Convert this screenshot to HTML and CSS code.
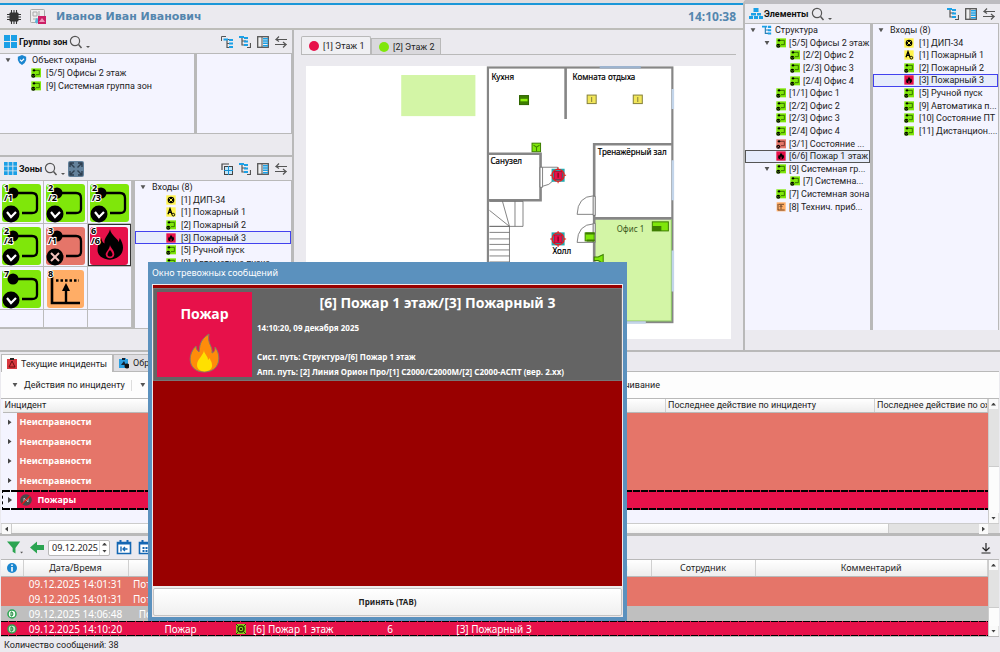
FILE: index.html
```html
<!DOCTYPE html>
<html lang="ru">
<head>
<meta charset="utf-8">
<meta name="viewport" content="width=device-width, initial-scale=1">
<title>Монитор</title>
<link rel="stylesheet" href="styles.css">
</head>
<body>
<svg class="sprite" aria-hidden="true">
  <symbol id="loop" viewBox="0 0 30 30"><rect x="1" y="1" width="29" height="27" fill="#7fe70a"/><path d="M9 7H25V20H15" fill="none" stroke="#1d4a00" stroke-width="2.2"/><circle cx="9" cy="7" r="3.5"/><circle cx="7" cy="23" r="6"/><path d="M4 22l3 3 4-4" fill="none" stroke="#7fe70a" stroke-width="1.8"/></symbol>
  <symbol id="fault" viewBox="0 0 30 30"><rect x="1" y="1" width="29" height="27" fill="#e57569"/><path d="M9 7H25V20H15" fill="none" stroke="#53201a" stroke-width="2.2"/><circle cx="9" cy="7" r="3.5"/><circle cx="7" cy="23" r="6"/><path d="M4 20l6 6m0-6l-6 6" stroke="#e57569" stroke-width="1.8"/></symbol>
  <symbol id="flame" viewBox="0 0 24 28"><path d="M12 0c1 6 8 9 8 12l1-4c6 9 3 19-9 20C-1 27-2 18 4 8c0 2 1 4 3 5C6 8 11 5 12 0z"/><path d="M12 14c0 3 4 5 4 9 0 5-8 5-8 0 0-2 4-5 4-9z" fill="#e7114a"/><path d="M12 19c3 3 3 6 0 6s-3-3 0-6z"/></symbol>
  <symbol id="fire" viewBox="0 0 30 30"><rect x="1" y="1" width="28" height="28" fill="#e7114a"/><use href="#flame" x="6" y="4" width="18" height="22"/></symbol>
  <symbol id="tech" viewBox="0 0 30 30"><rect x="2" y="1" width="27" height="27" fill="#ffad66"/><path d="M6 6V24H26M8 7H24M15 22V11m-4 4l4-5 4 5" fill="none" stroke="#532" stroke-width="2.4"/></symbol>
  <symbol id="sensor" viewBox="0 0 30 30"><rect x="1" y="1" width="28" height="28" fill="#fff34d"/><circle cx="15" cy="15" r="10"/><path d="M10 10l10 10m0-10L10 20" stroke="#fff34d" stroke-width="3"/></symbol>
  <symbol id="auto" viewBox="0 0 30 30"><rect x="1" y="1" width="28" height="28" fill="#fff34d"/><path d="M6 22L12 5l6 17M8 16h8" fill="none" stroke="#000" stroke-width="4"/><circle cx="22" cy="23" r="4" fill="#fff34d" stroke="#000" stroke-width="3"/></symbol>
  <symbol id="search" viewBox="0 0 22 14"><circle cx="6" cy="6" r="4.6" fill="none" stroke="#555" stroke-width="1.2"/><path d="M9.5 9.5L12.5 13" stroke="#555" stroke-width="1.5"/><path d="M17 11h4l-2 2z" fill="#555"/></symbol>
  <symbol id="collapse" viewBox="0 0 12 12"><path d="M.5 5V.5H5" fill="none" stroke="#555"/><path d="M3 3.500h5M6 3.500v8h4M6 7.500h4" fill="none" stroke="#555" stroke-width="1.2"/><path d="M2.500 2.500H7v2H2.500zM8 3h4v2H8zM8 6.500h4v2H8zM8 10h4v2H8z" fill="#1ba0e6"/></symbol>
  <symbol id="expand" viewBox="0 0 12 12"><path d="M3 2v7h4M3 5h4M11.500 7v4.500H8" fill="none" stroke="#555" stroke-width="1.2"/><path d="M0 0h5v2H0zM5 1h4v2H5zM5 4.500h4v2H5zM5 8h4v2H5z" fill="#1ba0e6"/></symbol>
  <symbol id="gridview" viewBox="0 0 12 12"><path d="M1 7V1H8" fill="none" stroke="#444" stroke-width="1.2"/><rect x="3.5" y="3.5" width="8" height="8" fill="#bfe6fa" stroke="#444"/><path d="M7.500 3v9M3 7.500h9" stroke="#168fd0"/></symbol>
  <symbol id="columns" viewBox="0 0 12 12"><rect x=".7" y=".7" width="10.600" height="10.600" fill="#eee" stroke="#555" stroke-width="1.300"/><path d="M5 1v10" stroke="#555"/><path d="M6 2h5v1.500H6zM6 4.300h5v1.500H6zM6 6.600h5v1.500H6zM6 9h5v1.500H6z" fill="#1ba0e6"/></symbol>
  <symbol id="swap" viewBox="0 0 12 12"><path d="M12 3.500H1l3-3m-3 3l3 2M0 8.500h11l-3-2.500m3 2.500l-3 3" fill="none" stroke="#555" stroke-width="1.200"/></symbol>
  <symbol id="treeicon" viewBox="0 0 12 12"><path d="M4 2v8h4M4 6h4" fill="none" stroke="#2a82b8" stroke-width="1.400"/><path d="M0 1h6v2H0zM7 1h4v2.500H7zM7 5h4v2.500H7zM7 9h4v2.500H7z" fill="#1ba0e6"/></symbol>
  <symbol id="zloop" viewBox="0 0 44 43"><rect x="2" y="3" width="39" height="38" rx="3" fill="#7fe70a"/><path d="M13 12H32Q37 12 37 17V28Q37 32 32 32H22" fill="none" stroke="#000" stroke-width="2.300"/><circle cx="13" cy="12" r="5.500"/><circle cx="11" cy="33" r="8.500"/><path d="M7 31l4 5 5-5" fill="none" stroke="#fff" stroke-width="2.200"/></symbol>
</svg>

<div class="upper">
  <main class="workspace">
    <header class="topbar">
      <svg class="chip" viewBox="0 0 14 14"><path d="M4.500 0v14M7 0v14M9.500 0v14M0 4.500h14M0 7h14M0 9.500h14" stroke="#333" stroke-width="1.100"/><rect x="2.500" y="2.500" width="9" height="9" rx="1" fill="#333"/></svg>
      <svg class="planicon" viewBox="0 0 17 16"><rect x=".5" y=".5" width="14" height="13" rx="1" fill="#eee" stroke="#aaa"/><path d="M3 3h4v4H3zM9 2v6h4M3 10h6" fill="none" stroke="#aaa"/><path d="M6 9l3 1-2 5-2-2z" fill="#5bb5dd"/><rect x="8" y="7" width="8" height="8" fill="#cc1f66"/><path d="M9 13l3-4 3 4z" fill="#ee9abb"/></svg>
      <h1 class="user">Иванов Иван Иванович</h1>
      <time class="clock">14:10:38</time>
    </header>
    <div class="body">
      <aside class="dock">
        <section class="panel groups">
          <div class="head">
            <svg class="ico13" viewBox="0 0 13 13"><path d="M0 0h6v6H0zM7 0h6v6H7zM0 7h6v6H0zM7 7h6v6H7z" fill="#1ba0e6"/></svg>
            <h2>Группы зон</h2><button class="ib find" aria-label="Поиск"><svg><use href="#search"/></svg></button>
            <span class="grow"></span>
            <button class="ib" aria-label="Свернуть"><svg><use href="#collapse"/></svg></button><button class="ib" aria-label="Развернуть"><svg><use href="#expand"/></svg></button><button class="ib" aria-label="Столбцы"><svg><use href="#columns"/></svg></button><button class="ib" aria-label="Поменять"><svg><use href="#swap"/></svg></button>
          </div>
          <div class="panes groups-panes">
            <div class="pane">
              <ul class="tree rows3">
                <li><i class="caret"></i><svg viewBox="0 0 12 12"><path d="M6 0L11 2V6Q10 10 6 12 2 10 1 6V2z" fill="#1b86d0"/><path d="M3.500 5.500l2 2 3-3" fill="none" stroke="#fff" stroke-width="1.300"/></svg>Объект охраны</li>
                <li class="l1"><svg><use href="#loop"/></svg>[5/5] Офисы 2 этаж</li>
                <li class="l1"><svg><use href="#loop"/></svg>[9] Системная группа зон</li>
              </ul>
            </div>
            <div class="pane"></div>
          </div>
        </section>
        <section class="panel zones">
          <div class="head">
            <svg class="ico13" viewBox="0 0 13 13"><path d="M0 0h3.700v3.700H0zM4.600 0h3.800v3.700H4.600zM9.300 0H13v3.700H9.300zM0 4.600h3.700v3.800H0zM4.600 4.600h3.800v3.800H4.600zM9.300 4.600H13v3.800H9.300zM0 9.300h3.700V13H0zM4.600 9.300h3.800V13H4.600zM9.300 9.300H13V13H9.300z" fill="#1ba0e6"/></svg>
            <h2>Зоны</h2><button class="ib find" aria-label="Поиск"><svg><use href="#search"/></svg></button>
            <button class="full" aria-label="Во весь экран"><svg viewBox="0 0 16 16"><path d="M2 6V2h4M10 2h4v4M14 10v4h-4M6 14H2v-4M2.500 2.500L6.500 6.500M13.500 2.500l-4 4M13.500 13.500l-4-4M2.500 13.500l4-4" fill="none" stroke="#2e3f50" stroke-width="1.400"/></svg></button>
            <span class="grow"></span>
            <button class="ib" aria-label="Плитка"><svg><use href="#gridview"/></svg></button><button class="ib" aria-label="Развернуть"><svg><use href="#expand"/></svg></button><button class="ib" aria-label="Столбцы"><svg><use href="#columns"/></svg></button><button class="ib" aria-label="Поменять"><svg><use href="#swap"/></svg></button>
          </div>
          <div class="panes zones-panes">
            <ul class="tiles pane">
              <li><svg viewBox="0 0 44 43"><use href="#zloop"/><text x="4" y="10">1</text><text x="4" y="20">/1</text></svg></li>
              <li><svg viewBox="0 0 44 43"><use href="#zloop"/><text x="4" y="10">2</text><text x="4" y="20">/2</text></svg></li>
              <li><svg viewBox="0 0 44 43"><use href="#zloop"/><text x="4" y="10">2</text><text x="4" y="20">/3</text></svg></li>
              <li><svg viewBox="0 0 44 43"><use href="#zloop"/><text x="4" y="10">2</text><text x="4" y="20">/4</text></svg></li>
              <li><svg viewBox="0 0 44 43"><rect x="2" y="3" width="39" height="38" rx="3" fill="#e57569"/><path d="M13 12H32Q37 12 37 17V28Q37 32 32 32H22" fill="none" stroke="#000" stroke-width="2.300"/><circle cx="13" cy="12" r="5.500"/><circle cx="11" cy="33" r="8.500"/><path d="M7 29l8 8m0-8l-8 8" stroke="#f2c2bc" stroke-width="2"/><text x="4" y="10">3</text><text x="4" y="20">/1</text></svg></li>
              <li class="on"><svg viewBox="0 0 44 43"><rect x="2" y="3" width="38" height="38" rx="3" fill="#e7114a"/><use href="#flame" x="9" y="5" width="26" height="31"/><text x="3" y="10">6</text><text x="3" y="20">/6</text></svg></li>
              <li><svg viewBox="0 0 44 43"><use href="#zloop"/><text x="4" y="10">7</text></svg></li>
              <li><svg viewBox="0 0 44 43"><rect x="3" y="3" width="37" height="38" rx="3" fill="#ffad66"/><path d="M8 9V36H36" fill="none" stroke="#000" stroke-width="2.600"/><path d="M12 13.500H35" stroke="#000" stroke-width="2.400" stroke-dasharray="2.500 2"/><path d="M22 35V19" stroke="#000" stroke-width="2.400"/><path d="M18 24l4-8 4 8z"/><text x="4" y="10">8</text></svg></li>
              <li></li><li></li><li></li><li></li>
            </ul>
            <div class="pane">
              <ul class="tree rows9">
                <li><i class="caret"></i>Входы (8)</li>
                <li class="l1"><svg><use href="#sensor"/></svg>[1] ДИП-34</li>
                <li class="l1"><svg><use href="#auto"/></svg>[1] Пожарный 1</li>
                <li class="l1"><svg><use href="#loop"/></svg>[2] Пожарный 2</li>
                <li class="l1 sel"><svg><use href="#fire"/></svg>[3] Пожарный 3</li>
                <li class="l1"><svg><use href="#loop"/></svg>[5] Ручной пуск</li>
                <li class="l1"><svg><use href="#loop"/></svg>[9] Автоматика пуска</li>
              </ul>
            </div>
          </div>
        </section>
      </aside>
      <section class="floor">
        <div class="tabs" role="tablist">
          <button class="tab active" role="tab"><i class="dot red"></i>[1] Этаж 1</button><button class="tab" role="tab"><i class="dot green"></i>[2] Этаж 2</button>
        </div>
        <svg class="plan" viewBox="307 66 424 272">
          <rect x="402" y="75" width="74" height="41" fill="#d3f5a6"/>
          <rect x="595" y="219" width="77" height="102" fill="#d3f5a6"/>
          <g fill="none" stroke="#868686" stroke-width="2.200"><rect x="488.500" y="67.500" width="184" height="254"/><path d="M566 68V119M672 144H594.500V321M488 153.500H541V200H488M594 218H672" stroke-width="2.600"/></g>
          <path d="M595.500 320.500H671.500V219" fill="none" stroke="#8cc763"/>
          <path d="M600 67h41" stroke="#9db4cf" stroke-width="3"/>
          <path d="M673 89v20M673 160v40M673 250v41M627 322h19" stroke="#c3d5ea" stroke-width="2.500"/>
          <g fill="#fff" stroke="#666" stroke-width=".8"><path d="M543 167H558Q557 184 543 186M577.500 214Q578 196 594 195.500M577.500 214H594M577.500 242Q578 224 594 223.500M577.500 242H594"/><path d="M540.500 167h2.500v20h-2.500zM593.500 196h2v19h-2zM593.500 223h2v19h-2z"/><path d="M490 201h33.500v25H490M515.500 201v25M503 201l7 25L490 210M510 226v60M490 226h20M490 232h20M490 238.500h20M490 244h20M490 249.500h20M490 255.500h20M490 261.500h20" fill="none"/></g>
          <g stroke="#2f6500"><rect x="520" y="95.500" width="9" height="9" fill="#3d7d00"/><path d="M521 100h7" stroke="#8ff010" stroke-width="2.500"/></g>
          <g fill="#f2e65a" stroke="#85803a"><rect x="587.500" y="95" width="9" height="8.500"/><path d="M592 97v5"/><rect x="633.500" y="95" width="9" height="8.500"/><path d="M638 97v5"/></g>
          <g fill="#7fe70a" stroke="#3d7d00"><rect x="532.500" y="143" width="8.500" height="8.500"/><path d="M534 145l3 2 3-2M537 147v4"/><rect x="585.500" y="232.500" width="9" height="8"/><path d="M587 240h8M586 233h9" stroke-width="2"/><rect x="652.500" y="221.500" width="16" height="9"/><path d="M653 226h8v4h-8z" fill="#3d7d00"/><path d="M594.500 256.500h4l5-2.500v9l-5-3h-4z"/></g>
          <g id="alarm"><rect x="552" y="168.500" width="13" height="13" fill="#21a9b0"/><rect x="554.500" y="171" width="8" height="8" fill="#e7114a" stroke="#902" stroke-width=".6"/><path d="M558.500 172.500v5" stroke="#601"/><circle cx="558.500" cy="175" r="6" fill="none" stroke="#f01818" stroke-width="1.200"/><path d="M558.500 167v2.500M558.500 180.500v2.500M550.500 175h2.500M564 175h2.500" stroke="#f01818"/></g>
          <use href="#alarm" y="63.500"/>
          <g class="room"><text x="492" y="80">Кухня</text><text x="573" y="80">Комната отдыха</text><text x="491" y="164">Санузел</text><text x="598" y="155">Тренажёрный зал</text><text x="553" y="254">Холл</text><text class="office" x="617" y="232">Офис 1</text></g>
        </svg>
      </section>
    </div>
  </main>
  <aside class="elements">
    <div class="head">
      <svg class="org" viewBox="0 0 14 11"><path d="M4.500 0h5v4h-5zM2 5h5v2.500H2zM8 5h4v2.500H8zM0 8h4v3H0zM5 8h4v3H5zM10 8h4v3h-4z" fill="#1ba0e6"/></svg>
      <h2>Элементы</h2><button class="ib find" aria-label="Поиск"><svg><use href="#search"/></svg></button>
      <span class="grow"></span>
      <button class="ib" aria-label="Развернуть"><svg><use href="#expand"/></svg></button><button class="ib" aria-label="Столбцы"><svg><use href="#columns"/></svg></button><button class="ib" aria-label="Поменять"><svg><use href="#swap"/></svg></button>
    </div>
    <div class="panes el-panes">
      <div class="pane">
        <ul class="tree rows15">
          <li><i class="caret"></i><svg><use href="#treeicon"/></svg>Структура</li>
          <li class="l1"><i class="caret"></i><svg><use href="#loop"/></svg>[5/5] Офисы 2 этаж</li>
          <li class="l2"><svg><use href="#loop"/></svg>[2/2] Офис 2</li>
          <li class="l2"><svg><use href="#loop"/></svg>[2/3] Офис 3</li>
          <li class="l2"><svg><use href="#loop"/></svg>[2/4] Офис 4</li>
          <li class="l1"><svg><use href="#loop"/></svg>[1/1] Офис 1</li>
          <li class="l1"><svg><use href="#loop"/></svg>[2/2] Офис 2</li>
          <li class="l1"><svg><use href="#loop"/></svg>[2/3] Офис 3</li>
          <li class="l1"><svg><use href="#loop"/></svg>[2/4] Офис 4</li>
          <li class="l1"><svg><use href="#fault"/></svg>[3/1] Состояние ...</li>
          <li class="l1 sel dark"><svg><use href="#fire"/></svg>[6/6] Пожар 1 этаж</li>
          <li class="l1"><i class="caret"></i><svg><use href="#loop"/></svg>[9] Системная гр...</li>
          <li class="l2"><svg><use href="#loop"/></svg>[7] Системна...</li>
          <li class="l1"><svg><use href="#loop"/></svg>[7] Системная зона</li>
          <li class="l1"><svg><use href="#tech"/></svg>[8] Технич. приб...</li>
        </ul>
      </div>
      <div class="pane">
        <ul class="tree rows9">
          <li><i class="caret"></i>Входы (8)</li>
          <li class="l1"><svg><use href="#sensor"/></svg>[1] ДИП-34</li>
          <li class="l1"><svg><use href="#auto"/></svg>[1] Пожарный 1</li>
          <li class="l1"><svg><use href="#loop"/></svg>[2] Пожарный 2</li>
          <li class="l1 sel"><svg><use href="#fire"/></svg>[3] Пожарный 3</li>
          <li class="l1"><svg><use href="#loop"/></svg>[5] Ручной пуск</li>
          <li class="l1"><svg><use href="#loop"/></svg>[9] Автоматика п...</li>
          <li class="l1"><svg><use href="#loop"/></svg>[10] Состояние ПТ</li>
          <li class="l1"><svg><use href="#loop"/></svg>[11] Дистанцион....</li>
        </ul>
      </div>
    </div>
  </aside>
</div>

<section class="incidents">
  <div class="itabs" role="tablist">
    <button class="itab active" role="tab"><svg viewBox="0 0 10 11"><path d="M0 1h3V0h4v1h3v10H0z" fill="#d8383f"/><path d="M5 3l3 6H2z" fill="none" stroke="#611"/><path d="M3 0h4v2H3z" fill="#222"/></svg>Текущие инциденты</button><button class="itab" role="tab"><svg viewBox="0 0 10 11"><path d="M0 1h3V0h4v1h2v9H0z" fill="#2b9fe0"/><path d="M3 0h3v2H3zM2 7l3-4 2 4z" fill="#123"/><circle cx="8" cy="8" r="2.500" fill="#111"/></svg>Обработанные</button>
  </div>
  <div class="itools">
    <button class="drop"><i class="caret"></i>Действия по инциденту</button>
    <button class="drop sep" aria-label="Действия"><i class="caret"></i></button>
    <span class="grow"></span>
    <button class="drop roll">Сворачивание</button>
  </div>
  <div class="scrollarea">
    <table class="inc">
      <colgroup><col class="gut"><col class="c1"><col class="c2"><col></colgroup>
      <thead><tr><th colspan="2">Инцидент</th><th>Последнее действие по инциденту</th><th>Последнее действие по охра</th></tr></thead>
      <tbody>
        <tr><td><i class="tri"></i></td><td colspan="3">Неисправности</td></tr>
        <tr><td><i class="tri"></i></td><td colspan="3">Неисправности</td></tr>
        <tr><td><i class="tri"></i></td><td colspan="3">Неисправности</td></tr>
        <tr><td><i class="tri"></i></td><td colspan="3">Неисправности</td></tr>
        <tr class="alarm"><td><i class="tri"></i></td><td colspan="3"><svg viewBox="0 0 12 12"><circle cx="6" cy="6" r="5.800" fill="#4a4a4a"/><path d="M4 8V4l4 4V4" fill="none" stroke="#bbb"/><path d="M2 10l8-8" stroke="#f01010" stroke-width="1.300"/></svg>Пожары</td></tr>
      </tbody>
    </table>
    <div class="vbar"><i class="up"></i><b></b><i class="down"></i></div>
  </div>
  <div class="hbar"><i class="left"></i><b></b><i class="right"></i></div>
</section>

<section class="messages">
  <div class="mtools">
    <button class="ib wide" aria-label="Фильтр"><svg viewBox="0 0 17 15"><path d="M0 1h14L9 8v6l-3-2V8z" fill="#2ba451"/><path d="M14 12h3l-1.500 2z" fill="#555"/></svg></button>
    <button class="ib wide" aria-label="Назад"><svg viewBox="0 0 16 14"><path d="M1 7l7-6v3.500h7v5H8V13z" fill="#2ba451"/></svg></button>
    <span class="date"><input type="text" value="09.12.2025" aria-label="Дата"><span class="spin"><i class="up"></i><i class="down"></i></span></span>
    <button class="ib wide" aria-label="К дате"><svg viewBox="0 0 15 15"><path d="M1 2.500h13v11H1z" fill="#fff" stroke="#1467b3" stroke-width="1.600"/><path d="M1 3.500h13M4 0v4M11 0v4" stroke="#1467b3" stroke-width="2"/><path d="M4.500 6.500v5M11 9H6.500M8.500 7l-2 2 2 2" fill="none" stroke="#1467b3" stroke-width="1.400"/></svg></button>
    <button class="ib wide" aria-label="Календарь"><svg viewBox="0 0 15 15"><path d="M1 2.500h13v11H1z" fill="#fff" stroke="#1467b3" stroke-width="1.600"/><path d="M1 3.500h13M4 0v4M11 0v4" stroke="#1467b3" stroke-width="2"/><path d="M4 8h8M4 11h8" stroke="#1467b3" stroke-width="2" stroke-dasharray="2 1"/></svg></button>
    <span class="grow"></span>
    <button class="ib" aria-label="Вниз"><svg viewBox="0 0 12 12"><path d="M6 1v8M2.500 5.500l3.500 3.500 3.500-3.500M1.500 11h9" fill="none" stroke="#222" stroke-width="1.200"/></svg></button>
  </div>
  <div class="scrollarea">
    <table class="msg">
      <colgroup><col class="m1"><col class="m2"><col class="m3"><col class="m4"><col class="m5"><col class="m6"><col class="m7"><col class="m8"><col class="m9"><col></colgroup>
      <thead><tr><th><svg viewBox="0 0 10 10"><circle cx="5" cy="5" r="5" fill="#1a86cf"/><path d="M5 1.500v1.500M5 4v4.500" stroke="#fff" stroke-width="1.600"/></svg></th><th>Дата/Время</th><th></th><th></th><th></th><th></th><th></th><th>Организация</th><th>Сотрудник</th><th>Комментарий</th></tr></thead>
      <tbody>
        <tr><td></td><td>09.12.2025 14:01:31</td><td class="start">Потеря связи</td><td></td><td></td><td></td><td></td><td></td><td></td><td></td></tr>
        <tr><td></td><td>09.12.2025 14:01:31</td><td class="start">Потеря связи</td><td></td><td></td><td></td><td></td><td></td><td></td><td></td></tr>
        <tr class="grey"><td><svg viewBox="0 0 10 10"><circle cx="5" cy="5" r="4" fill="#f4fff4" stroke="#2ba451" stroke-width="1.500"/><path d="M4 3h1q2 2 0 4H4z" fill="none" stroke="#178238"/></svg></td><td>09.12.2025 14:06:48</td><td>Подключение ПК</td><td></td><td></td><td></td><td></td><td></td><td></td><td></td></tr>
        <tr class="alarm"><td><svg viewBox="0 0 10 10"><circle cx="5" cy="5" r="4" fill="#bfe8c8" stroke="#2ba451" stroke-width="1.500"/><path d="M4 3h1q2 2 0 4H4z" fill="none" stroke="#178238"/></svg></td><td>09.12.2025 14:10:20</td><td>Пожар</td><td><svg viewBox="0 0 10 10"><path d="M0 0h10v10H0z" fill="#8ccf1e"/><circle cx="5" cy="5" r="3" fill="none" stroke="#243a00" stroke-width="1.500"/><path d="M0 0l2 2M10 0L8 2M0 10l2-2M10 10L8 8" stroke="#243a00"/><circle cx="5" cy="5" r="1"/></svg></td><td class="start">[6] Пожар 1 этаж</td><td>6</td><td>[3] Пожарный 3</td><td></td><td></td><td></td></tr>
      </tbody>
    </table>
    <div class="vbar"><i class="up"></i><b></b><i class="down"></i></div>
  </div>
  <footer class="status">Количество сообщений: 38</footer>
</section>

<div class="dialog" role="dialog" aria-labelledby="dlg">
  <h2 id="dlg">Окно тревожных сообщений</h2>
  <div class="frame">
    <div class="list">
      <article class="card">
        <div class="kind">Пожар
          <svg viewBox="0 0 31 40"><path d="M20 1C10 7 11 14 10 19 8 17 7 16 7 13-3 23 0 39 15 39 31 39 33 23 26 14c0 4-1 5-3 6 1-7-5-9-3-19z" fill="#ff8c0a" stroke="#857b62"/><path d="M15 17c0 5-7 9-7 15 0 9 16 8 15 0 0-4-2-4-2-7l-2 2c0-4-4-6-4-10z" fill="#ffe000"/></svg>
        </div>
        <div class="info">
          <h3>[6] Пожар 1 этаж/[3] Пожарный 3</h3>
          <p class="when">14:10:20, 09 декабря 2025</p>
          <p>Сист. путь: Структура/[6] Пожар 1 этаж</p>
          <p>Апп. путь: [2] Линия Орион Про/[1] С2000/С2000М/[2] С2000-АСПТ (вер. 2.xx)</p>
        </div>
      </article>
    </div>
    <button class="accept">Принять (TAB)</button>
  </div>
</div>
</body>
</html>
```
FILE: styles.css
```css
:root {
  --ui: Roboto, "Noto Sans", sans-serif;
  --noto: "Noto Sans", sans-serif;
  --line: #b9b9b9;
  --face: #ebeaef;
  --view: #f4f4ff;
  --fault: #e57569;
  --fire: #e7114a;
}
* { box-sizing: border-box; }
body {
  margin: 0;
  height: 100vh;
  display: flex;
  flex-direction: column;
  overflow: hidden;
  background: var(--face);
  color: #222;
  font: 9px/12px var(--ui);
}
ul, h1, h2, h3, p { margin: 0; padding: 0; list-style: none; }
button, input { font: inherit; color: inherit; margin: 0; padding: 0; border: 0; background: none; }
.sprite { position: absolute; width: 0; height: 0; }
.grow { flex: 1; }

.upper {
  flex: 1;
  min-height: 0;
  display: grid;
  grid-template-columns: minmax(0, 745fr) minmax(0, 255fr);
  border-bottom: 2px solid var(--line);
}
.workspace { display: flex; flex-direction: column; border-right: 2px solid var(--line); border-top: 3px solid #dfdddf; }
.topbar {
  height: 27px;
  display: flex;
  align-items: center;
  padding: 0 7px;
  border-top: 2px solid #1b97d8;
  border-bottom: 2px solid #bdbdb9;
}
.chip { width: 14px; height: 14px; margin-right: 9px; }
.planicon { width: 17px; height: 16px; margin-right: 9px; }
.user { font: bold 11px/20px "DejaVu Sans", sans-serif; color: #5486ae; }
.clock { font: bold 12px/20px var(--noto); color: #5486ae; margin-left: auto; }
.body { flex: 1; display: grid; grid-template-columns: minmax(0, 294fr) minmax(0, 449fr); }
.dock { border-right: 2px solid var(--line); }
.head { display: flex; align-items: center; height: 23px; padding: 0 5px 0 4px; }
.head h2 { font: bold 9px/12px var(--ui); color: #111; }
.ico13 { width: 13px; height: 13px; margin-right: 2px; }
.org { width: 14px; height: 11px; margin-right: 1px; }
.ib { width: 12px; height: 12px; margin-left: 6px; display: block; }
.ib svg { width: 100%; height: 100%; display: block; }
.ib.find { width: 22px; height: 14px; margin-left: 2px; }
.full { width: 16px; height: 16px; background: #64829c; border-radius: 2px; margin-left: 2px; }
.full svg { display: block; }
.panes { display: grid; gap: 3px; background: var(--line); border: 1px solid var(--line); border-left: 0; }
.pane { background: var(--view); min-width: 0; overflow: hidden; }
.groups { padding-bottom: 21px; border-bottom: 2px solid var(--line); }
.groups-panes { grid-template-columns: 195fr 94fr; height: 81px; }
.zones-panes { grid-template-columns: 132px minmax(0, 1fr); height: 149px; }
.tree { display: grid; grid-auto-rows: 1fr; white-space: nowrap; }
.rows3 { height: 38px; }
.rows9 { height: 113px; }
.zones .rows9 { height: 88px; }
.rows15 { height: 189px; }
.tree li { display: flex; align-items: center; padding-left: 4px; line-height: 12px; min-height: 0; }
.tree .l1 { padding-left: 18px; }
.tree .l2 { padding-left: 32px; }
.tree svg { width: 10px; height: 10px; flex: none; margin: 0 5px 0 0; }
.tree li > svg:first-child { margin-left: 13px; }
.rows15 svg { margin-right: 3px; }
.caret { flex: none; width: 8px; height: 4px; margin-right: 5px; background: #555; clip-path: polygon(20% 0, 80% 0, 50% 100%); }
.tree .sel { background: #e6ecfc; outline: 1px solid #4242ee; outline-offset: -1px; }
.tree .dark { outline-color: #555; }
.tiles { display: grid; grid-template-columns: repeat(3, 44px); grid-template-rows: repeat(3, 43px) 1fr; }
.tiles li { border-right: 1px solid #bcbcbc; border-bottom: 1px solid #bcbcbc; overflow: hidden; }
.tiles .on { box-shadow: inset 0 0 0 1px #333; }
.tiles svg { display: block; width: 44px; height: 43px; }
.tiles text { font: bold 9px var(--noto); fill: #000; stroke: #fff; stroke-width: 2px; paint-order: stroke; }

.floor { padding: 7px 7px 0; }
.tabs { display: flex; align-items: flex-end; height: 18px; border-bottom: 1px solid var(--line); margin-bottom: 11px; }
.tab { height: 16px; width: 70px; padding: 0 7px; display: flex; align-items: center; gap: 4px; border: 1px solid var(--line); border-bottom: 0; background: #d9d8dc; white-space: nowrap; }
.tab.active { height: 18px; background: #f0f0f3; border-radius: 2px 2px 0 0; }
.dot { width: 10px; height: 10px; border-radius: 50%; flex: none; }
.red { background: var(--fire); }
.green { background: #7fe70a; }
.plan { display: block; width: calc(100% - 10px); margin-left: 5px; background: #fff; }
.room text { font: 8px var(--noto); fill: #000; stroke: #000; stroke-width: .2px; }
.room .office { fill: #3c5a1e; stroke: none; }

.elements { border-top: 4px solid #bdbcc0; display: flex; flex-direction: column; }
.elements .head { height: 19px; }
.el-panes { grid-template-columns: 126fr 126fr; height: 307px; margin-right: 1px; border-bottom: 0; }

.incidents { border-bottom: 3px solid var(--line); padding: 2px 1px 0; background: var(--face); }
.itabs { display: flex; height: 18px; align-items: flex-end; border-bottom: 1px solid var(--line); }
.itab { height: 17px; padding: 0 5px; display: flex; align-items: center; gap: 4px; background: #dfdee2; border: 1px solid var(--line); border-bottom: 0; }
.itab.active { height: 18px; background: #fdfdfd; margin-bottom: -1px; }
.itab svg { width: 10px; height: 11px; }
.itools { display: flex; align-items: center; height: 26px; background: #fdfdfd; }
.drop { display: flex; align-items: center; padding-left: 10px; white-space: nowrap; }
.drop.sep { border-left: 1px solid #ddd; margin-left: 6px; height: 11px; padding-left: 7px; }
.drop.roll { margin-right: 339px; }
.scrollarea { display: flex; background: var(--view); border-top: 1px solid var(--line); }
table { border-collapse: collapse; table-layout: fixed; flex: 1; width: 0; }
th, td { padding: 0; overflow: hidden; white-space: nowrap; }
th { background: linear-gradient(#fff, #ededed); font-weight: normal; border-right: 1px solid #d0d0d0; border-bottom: 1px solid var(--line); }
.inc { align-self: flex-start; margin-left: 1px; }
.gut { width: 14px; }
.c1 { width: 649px; }
.c2 { width: 209px; }
.inc th { height: 13px; line-height: 12px; text-align: left; padding-left: 2px; }
.inc td { height: 19px; background: var(--fault); color: #fff; font: bold 9px/16px var(--noto); padding-left: 3px; }
.inc tr:nth-child(odd) td { height: 20px; }
.inc td:first-child { background-color: var(--view); padding: 0; }
.inc .alarm td { background: repeating-linear-gradient(90deg, #000 0 7px, transparent 7px 8px) 0 0 / 100% 2px no-repeat, repeating-linear-gradient(90deg, #000 0 7px, transparent 7px 8px) 0 100% / 100% 2px no-repeat var(--fire); }
.inc .alarm td:first-child { background-color: var(--view); border-left: 1px dashed #000; }
.inc svg { width: 12px; height: 12px; vertical-align: -3px; margin: 0 6px 0 0; }
.tri { display: block; width: 4px; height: 6px; margin-left: 5px; background: #444; clip-path: polygon(0 0, 100% 50%, 0 100%); }
.vbar { width: 11px; display: flex; flex-direction: column; background: #e2e2e2; border-left: 1px solid #ccc; }
.incidents .vbar { height: 124px; }
.vbar b { margin-top: auto; background: #fcfcfc; border-top: 1px solid #ccc; flex: 0 0 38%; }
.up, .down, .left, .right { width: 9px; height: 10px; background: #fafafa; display: grid; place-items: center; }
.up::before, .down::before { content: ""; width: 5px; height: 3px; background: #444; clip-path: polygon(50% 0, 100% 100%, 0 100%); }
.down::before { clip-path: polygon(0 0, 100% 0, 50% 100%); }
.left::before, .right::before { content: ""; width: 3px; height: 5px; background: #444; clip-path: polygon(100% 0, 100% 100%, 0 50%); }
.right::before { clip-path: polygon(0 0, 100% 50%, 0 100%); }
.hbar { display: flex; height: 10px; border-top: 1px solid #ccc; background: #e2e2e2; padding: 0 11px 0 1px; }
.hbar b { flex: 0 1 89%; background: linear-gradient(#fff, #f2f2f2); border: 1px solid #ccc; border-width: 0 1px; }
.hbar .right { margin-left: auto; }

.messages { padding: 0 1px; }
.mtools { display: flex; align-items: center; height: 23px; padding: 0 7px 0 0; }
.ib.wide { width: 16px; height: 15px; }
.date { display: flex; align-items: center; width: 62px; height: 16px; margin-left: 3px; border: 1px solid var(--line); border-radius: 2px; background: #fff; }
.date input { width: 50px; padding-left: 3px; font: 9px/12px var(--noto); }
.spin { border-left: 1px solid #ddd; width: 10px; }
.spin i { height: 7px; background: none; }
.msg { font: 10px/12px var(--noto); }
.m1 { width: 22px; }
.m2 { width: 105px; }
.m3 { width: 105px; }
.m4 { width: 15px; }
.m5 { width: 90px; }
.m6 { width: 104px; }
.m7 { width: 104px; }
.m8 { width: 105px; }
.m9 { width: 104px; }
.msg th { height: 16px; font-size: 9px; }
.msg td { height: 15px; text-align: center; background: var(--fault); color: #fff; }
.msg .start { text-align: left; padding-left: 5px; }
.msg .grey td { background: #bfbfbf; }
.msg .alarm td { background: repeating-linear-gradient(90deg, #000 0 7px, transparent 7px 8px) 0 0 / 100% 1px no-repeat, repeating-linear-gradient(90deg, #000 0 7px, transparent 7px 8px) 0 100% / 100% 1px no-repeat var(--fire); }
.msg svg { display: block; width: 10px; height: 10px; margin: 0 auto; }
.messages .vbar b { flex-basis: 25%; }
.status { height: 16px; padding: 2px 3px; border-top: 1px solid var(--line); font: 9px/12px var(--ui); }

.dialog {
  position: fixed;
  left: 148px;
  top: 262px;
  width: 479px;
  height: 359px;
  padding: 0 4px 4px;
  display: flex;
  flex-direction: column;
  background: #5b91be;
}
.dialog h2 { font: 9px/22px var(--noto); color: #fff; }
.frame { flex: 1; display: flex; flex-direction: column; border: 1px solid #f0e8e8; background: #ececec; gap: 2px; }
.list { flex: 1; background: #990000; padding-top: 3px; }
.card { display: flex; height: 93px; padding: 3px; background: #646464; border: 1px solid #777; }
.kind { width: 95px; background: var(--fire); color: #fff; font: bold 14px/18px var(--noto); text-align: center; padding-top: 13px; }
.kind svg { display: block; width: 31px; height: 40px; margin: 10px auto 0; }
.info { flex: 1; padding-left: 5px; color: #fff; font: bold 8px/15px var(--noto); white-space: nowrap; }
.info h3 { font: bold 14px/21px var(--noto); text-align: center; }
.when { margin: 7px 0 14px; }
.accept { height: 28px; border: 1px solid #c4c4c4; border-radius: 2px; background: linear-gradient(#fff, #f0f0f0); font: bold 8px/12px var(--noto); }
```
